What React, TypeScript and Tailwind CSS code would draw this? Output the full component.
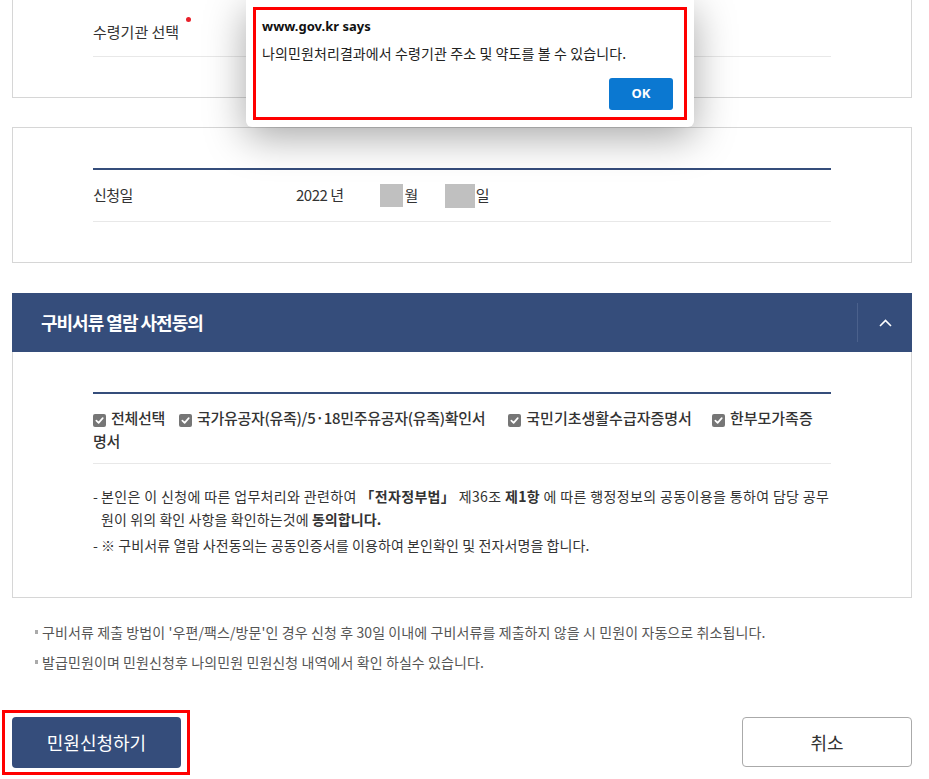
import React from 'react';

const kr = { fontFamily: '"Noto Sans CJK KR", "Noto Sans", sans-serif' };
const dlg = { fontFamily: '"Noto Sans", "Noto Sans CJK KR", sans-serif' };

function Check() {
  return (
    <span className="inline-flex w-[13px] h-[13px] rounded-[2px] bg-[#767676] items-center justify-center align-[-1px] mr-[5px]">
      <svg width="9" height="9" viewBox="0 0 10 10" fill="none">
        <path d="M1.5 5.2 L4 7.6 L8.6 2.4" stroke="white" strokeWidth="1.9" strokeLinecap="round" strokeLinejoin="round" />
      </svg>
    </span>
  );
}

function Dialog() {
  return (
    <div
      style={dlg}
      className="absolute left-[246px] top-0 w-[448px] h-[127px] bg-white rounded-b-[6px] shadow-[0_10px_40px_rgba(0,0,0,0.35)] p-[7px]"
    >
      <div className="h-[113px] border-[3px] border-[#ff0000] px-[6px] pt-[6px]">
        <div className="text-[13px] font-bold text-[#111] leading-[20px]">www.gov.kr says</div>
        <div style={kr} className="mt-[7px] text-[14px] text-[#222] leading-[20px] tracking-[0.1px]">
          나의민원처리결과에서 수령기관 주소 및 약도를 볼 수 있습니다.
        </div>
        <div className="flex justify-end pr-[5px] mt-[15px]">
          <button className="w-[64px] h-[32px] rounded-[3px] bg-[#0b78d1] text-white text-[13px] font-bold">OK</button>
        </div>
      </div>
    </div>
  );
}

export default function App() {
  return (
    <div style={kr} className="relative w-[929px] h-[779px] bg-white overflow-hidden text-[#333]">
      <div className="ml-[12px] w-[900px]">
        {/* 수령기관 카드 (위쪽 잘림) */}
        <div className="border-x border-b border-[#d6d6d6] px-[80px] pb-[40px]">
          <div className="pt-[19px] pb-[13px] border-b border-[#e8e8e8]">
            <span className="relative text-[15px] leading-[22px]">
              수령기관 선택
              <span className="absolute -right-[12px] top-[-4px] w-[5px] h-[5px] rounded-full bg-[#e8202a]" />
            </span>
          </div>
        </div>

        {/* 신청일 */}
        <div className="mt-[29px] border border-[#d6d6d6] px-[80px] pt-[40px] pb-[40px]">
          <div className="h-[2px] bg-[#354d7b]" />
          <div className="h-[52px] flex items-center border-b border-[#e8e8e8] text-[15px] tracking-[-0.5px]">
            <span className="w-[203px]">신청일</span>
            <span>2022 년</span>
            <span className="ml-[37px] w-[23px] h-[23px] bg-[#c0c0c0]" />
            <span className="ml-[1px]">월</span>
            <span className="ml-[27px] w-[30px] h-[24px] bg-[#c0c0c0]" />
            <span className="ml-[1px]">일</span>
          </div>
        </div>

        {/* 구비서류 열람 사전동의 */}
        <div className="mt-[30px] h-[59px] bg-[#354d7b] flex items-center">
          <h2 className="flex-1 pl-[29px] text-white text-[18px] font-bold tracking-[-1px]">구비서류 열람 사전동의</h2>
          <div className="w-px h-[39px] bg-[#4b618c]" />
          <div className="w-[54px] flex justify-center">
            <svg width="13" height="8" viewBox="0 0 13 8" fill="none">
              <path d="M1 7 L6.5 1.5 L12 7" stroke="white" strokeWidth="1.6" />
            </svg>
          </div>
        </div>
        <div className="border-x border-b border-[#d6d6d6] px-[80px] pt-[40px] pb-[40px]">
          <div className="h-[2px] bg-[#354d7b]" />
          <div className="pt-[12px] pb-[11px] border-b border-[#e8e8e8] text-[15px] leading-[23px] font-medium tracking-[-0.3px]">
            <div className="whitespace-nowrap">
              <span className="mr-[14px]"><Check />전체선택</span>
              <span className="mr-[23px]"><Check />국가유공자(유족)/5·18민주유공자(유족)확인서</span>
              <span className="mr-[20px] tracking-[0px]"><Check />국민기초생활수급자증명서</span>
              <span className="tracking-[0px]"><Check />한부모가족증</span>
            </div>
            <div>명서</div>
          </div>
          <div className="pt-[21px] text-[14px] leading-[23px] tracking-[0.1px]">
            <div className="flex">
              <span className="w-[8px] shrink-0">-</span>
              <p>
                <span className="whitespace-nowrap tracking-[0.36px]">
                  본인은 이 신청에 따른 업무처리와 관련하여 <b>「전자정부법」</b> 제36조 <b>제1항</b> 에 따른 행정정보의 공동이용을 통하여 담당 공무
                </span>
                <br />
                원이 위의 확인 사항을 확인하는것에 <b>동의합니다.</b>
              </p>
            </div>
            <div className="flex mt-[3px]">
              <span className="w-[8px] shrink-0">-</span>
              <p>※ 구비서류 열람 사전동의는 공동인증서를 이용하여 본인확인 및 전자서명을 합니다.</p>
            </div>
          </div>
        </div>

        {/* 안내 */}
        <ul className="mt-[24px] pl-[23px] text-[14px] leading-[20px] text-[#555] tracking-[0.1px] space-y-[10px]">
          <li className="flex items-center gap-[4px]">
            <span className="w-[3px] h-[4px] bg-[#aaa]" />
            구비서류 제출 방법이 '우편/팩스/방문'인 경우 신청 후 30일 이내에 구비서류를 제출하지 않을 시 민원이 자동으로 취소됩니다.
          </li>
          <li className="flex items-center gap-[4px]">
            <span className="w-[3px] h-[4px] bg-[#aaa]" />
            발급민원이며 민원신청후 나의민원 민원신청 내역에서 확인 하실수 있습니다.
          </li>
        </ul>

        {/* 버튼 */}
        <div className="mt-[45px] flex justify-between">
          <div className="relative">
            <button className="w-[169px] h-[51px] rounded-[4px] bg-[#354d7b] text-white text-[18px]">민원신청하기</button>
            <div className="absolute -left-[10px] -right-[9px] -top-[7px] -bottom-[7px] border-[3px] border-[#ff0000]" />
          </div>
          <button className="w-[170px] h-[50px] rounded-[4px] border border-[#aaa] bg-white text-[18px] text-[#333]">취소</button>
        </div>
      </div>

      <Dialog />
    </div>
  );
}
